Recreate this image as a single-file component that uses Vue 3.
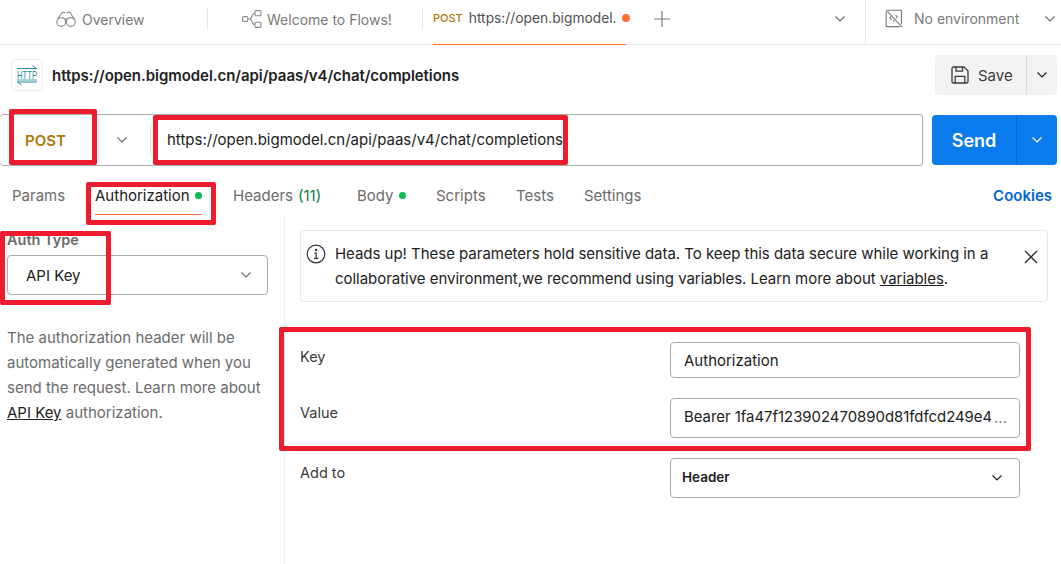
<script setup>
const requestUrl = 'https://open.bigmodel.cn/api/paas/v4/chat/completions'

const requestTabs = [
  { name: 'Params', width: 83 },
  { name: 'Authorization', width: 138, dot: true, active: true },
  { name: 'Headers', width: 124, count: '(11)' },
  { name: 'Body', width: 79, dot: true },
  { name: 'Scripts', width: 80 },
  { name: 'Tests', width: 68 },
  { name: 'Settings', width: 100 },
]
</script>

<template>
  <div class="page">
    <header class="topbar">
      <div class="tab tab-overview">
        <svg width="20" height="18" viewBox="0 0 20 18" fill="none" stroke="#8a8a8a" stroke-width="1.1">
          <circle cx="5.2" cy="12" r="4.4" />
          <circle cx="14.8" cy="12" r="4.4" />
          <path d="M1.5 9.5 5.5 3.2C6.5 1.6 8.6 1.8 9.3 3.4M18.5 9.5 14.5 3.2C13.5 1.6 11.4 1.8 10.7 3.4M8.3 9.6C9.2 8.8 10.8 8.8 11.7 9.6" />
        </svg>
        <span>Overview</span>
      </div>
      <div class="tab tab-flows">
        <svg width="20" height="18" viewBox="0 0 20 18" fill="none" stroke="#8a8a8a" stroke-width="1.1">
          <rect x="0.6" y="6.6" width="5.2" height="4.8" rx="1" />
          <rect x="13" y="0.6" width="6" height="5.2" rx="1" />
          <rect x="13" y="12.2" width="6" height="5.2" rx="1" />
          <path d="M5.8 9H8M8 9C10 9 9.5 3.2 13 3.2M8 9C10 9 9.5 14.8 13 14.8" />
        </svg>
        <span>Welcome to Flows!</span>
      </div>
      <div class="tab tab-request">
        <span class="tab-method">POST</span>
        <span class="tab-url">https://open.bigmodel.</span>
        <span class="tab-dot"></span>
      </div>
      <svg class="plus" width="16" height="16" viewBox="0 0 16 16" stroke="#7f7f7f" stroke-width="1.2">
        <path d="M8 0V16M0 8H16" />
      </svg>
      <svg class="tabs-chevron chev" width="10" height="6" viewBox="0 0 10 6"><path d="M.5.5 5 5 9.5.5" /></svg>
      <div class="env">
        <svg width="18" height="19" viewBox="0 0 18 19" fill="none" stroke="#777" stroke-width="1.1">
          <path d="M3 1.2H16.4V15M14.8 17.6H1.2V2.8" />
          <path d="M1 .8 17.4 18.4" />
          <path d="M6 7.4 4.8 8.8 6.6 11M10.4 6.4 12 7.2 11.4 9.4M7.8 11.6 9.8 12.4" />
        </svg>
        <span class="env-label">No environment</span>
        <svg class="chev" width="10" height="6" viewBox="0 0 10 6"><path d="M.5.5 5 5 9.5.5" /></svg>
      </div>
    </header>

    <div class="title-row">
      <div class="http-icon">
        <svg width="22" height="22" viewBox="0 0 22 22" fill="none" stroke="#1d8a9e" stroke-width="1">
          <path d="M1 4.5H21M16.5 1.6 20.5 4.5" />
          <text x="11" y="15" text-anchor="middle" textLength="20" lengthAdjust="spacingAndGlyphs" class="http-text">HTTP</text>
          <path d="M1 16H21" stroke-width=".8" />
          <path d="M1 18H21M1.5 18 5.5 20.8" />
        </svg>
      </div>
      <div class="title">{{ requestUrl }}</div>
      <div class="save-btn">
        <div class="save-main">
          <svg width="18" height="18" viewBox="0 0 18 18" fill="none" stroke="#3a3a3a" stroke-width="1.3">
            <path d="M1 2.4C1 1.6 1.6 1 2.4 1H13L17 5V15.6C17 16.4 16.4 17 15.6 17H2.4C1.6 17 1 16.4 1 15.6Z" />
            <path d="M5 1V5.2H11.5V1M4.2 17V10.4H13.8V17" />
          </svg>
          <span>Save</span>
        </div>
        <div class="save-more">
          <svg class="chev dark" width="10" height="6" viewBox="0 0 10 6"><path d="M.5.5 5 5 9.5.5" /></svg>
        </div>
      </div>
    </div>

    <div class="url-row">
      <div class="url-box">
        <div class="method">
          <span>POST</span>
          <svg class="chev" width="10" height="6" viewBox="0 0 10 6"><path d="M.5.5 5 5 9.5.5" /></svg>
        </div>
        <div class="url-text">{{ requestUrl }}</div>
      </div>
      <div class="send">
        <div class="send-main">Send</div>
        <div class="send-more">
          <svg class="chev white" width="10" height="6" viewBox="0 0 10 6"><path d="M.5.5 5 5 9.5.5" /></svg>
        </div>
      </div>
    </div>

    <nav class="req-tabs">
      <div
        v-for="t in requestTabs"
        :key="t.name"
        class="req-tab"
        :class="{ active: t.active }"
        :style="{ width: t.width + 'px' }"
      >
        <span class="req-tab-label">
          {{ t.name }}
          <span v-if="t.count" class="count">{{ t.count }}</span>
          <span v-if="t.dot" class="green-dot"></span>
        </span>
      </div>
      <div class="cookies">Cookies</div>
    </nav>

    <main class="body">
      <aside class="left">
        <div class="auth-label">Auth Type</div>
        <div class="auth-select">
          <span>API Key</span>
          <svg class="chev" width="10" height="6" viewBox="0 0 10 6"><path d="M.5.5 5 5 9.5.5" /></svg>
        </div>
        <p class="auth-desc">
          The authorization header will be automatically generated when you send the request. Learn more about
          <a class="link">API Key</a> authorization.
        </p>
      </aside>
      <section class="right">
        <div class="alert">
          <svg class="alert-icon" width="20" height="20" viewBox="0 0 20 20" fill="none" stroke="#333" stroke-width="1.2">
            <circle cx="10" cy="10" r="8.8" />
            <path d="M8.2 9.2H10.2V14.4M8 14.4H12.4" />
            <circle cx="10" cy="6" r=".6" fill="#333" />
          </svg>
          <div class="alert-text">
            Heads up! These parameters hold sensitive data. To keep this data secure while working in a collaborative environment,we recommend using variables. Learn more about <a class="link">variables</a>.
          </div>
          <svg class="alert-close" width="14" height="14" viewBox="0 0 14 14" stroke="#2b2b2b" stroke-width="1.4">
            <path d="M1 1 13 13M13 1 1 13" />
          </svg>
        </div>
        <div class="form">
          <div class="form-label">Key</div>
          <div class="field field-key">Authorization</div>
          <div class="form-label">Value</div>
          <div class="field field-value">
            <span class="value-text">Bearer 1fa47f123902470890d81fdfcd249e4</span><span class="ellipsis">...</span>
          </div>
          <div class="form-label">Add to</div>
          <div class="field field-select">
            <span>Header</span>
            <svg class="chev dark" width="10" height="6" viewBox="0 0 10 6"><path d="M.5.5 5 5 9.5.5" /></svg>
          </div>
        </div>
      </section>
    </main>

    <div class="mark mark-post"></div>
    <div class="mark mark-url"></div>
    <div class="mark mark-auth"></div>
    <div class="mark mark-type"></div>
    <div class="mark mark-form"></div>
  </div>
</template>

<style>
html, body { margin: 0; background: #fff; overflow: hidden; }
</style>

<style scoped>
.page {
  position: relative;
  width: 1061px;
  height: 564px;
  overflow: hidden;
  background: #fff;
  font-family: Inter, "Liberation Sans", sans-serif;
  font-size: 15px;
  color: #212121;
}
.chev { fill: none; stroke: #6b6b6b; stroke-width: 1.2; flex-shrink: 0; }
.chev.dark { stroke: #212121; }
.chev.white { stroke: #fff; }

.topbar {
  display: flex;
  align-items: flex-start;
  height: 45px;
  box-sizing: border-box;
  border-bottom: 1px solid #e8e8e8;
  font-size: 14px;
  color: #7a7a7a;
}
.tab { display: flex; align-items: center; gap: 6px; box-sizing: border-box; }
.tab-overview { width: 208px; height: 22px; margin-top: 8px; padding-left: 56px; border-right: 1px solid #e8e8e8; }
.tab-flows { width: 215px; height: 22px; margin-top: 8px; padding-left: 34px; gap: 5px; border-right: 1px solid #e8e8e8; }
.tab-request {
  width: 193px;
  height: 45px;
  margin-left: 10px;
  padding-bottom: 8px;
  border-bottom: 1px solid #ff6c37;
  color: #505050;
}
.tab-method { font-size: 11px; font-weight: 500; color: #ad7a03; }
.tab-url { font-size: 13.8px; white-space: nowrap; }
.tab-dot { flex-shrink: 0; width: 8px; height: 8px; border-radius: 50%; background: #ff6c37; margin-left: -1px; }
.plus { margin: 11px 0 0 28px; }
.tabs-chevron { margin: 16px 0 0 165px; }
.env {
  display: flex;
  align-items: center;
  width: 196px;
  height: 44px;
  margin-left: 20px;
  padding: 0 0 7px 19px;
  border-left: 1px solid #e8e8e8;
  box-sizing: border-box;
}
.env-label { margin-left: 11px; width: 131px; white-space: nowrap; }

.title-row {
  display: flex;
  align-items: center;
  height: 60px;
  margin-bottom: 9px;
  padding: 0 4px 0 11px;
  box-sizing: border-box;
}
.http-icon {
  display: flex;
  align-items: center;
  justify-content: center;
  width: 32px;
  height: 32px;
  box-sizing: border-box;
  border: 1px solid #ededed;
  border-radius: 5px;
}
.http-text { font-size: 11px; fill: #1d8a9e; stroke: none; font-family: "Liberation Sans", sans-serif; }
.title { margin-left: 9px; font-size: 15px; font-weight: 600; letter-spacing: -0.05px; color: #212121; flex: 1; }
.save-btn { display: flex; height: 40px; width: 122px; background: #f2f2f2; border-radius: 4px; }
.save-main {
  display: flex;
  align-items: center;
  gap: 9px;
  width: 92px;
  padding-left: 16px;
  box-sizing: border-box;
  border-right: 1px solid #dcdcdc;
  color: #3a3a3a;
}
.save-more { flex: 1; display: flex; align-items: center; justify-content: center; }

.url-row { display: flex; height: 52px; padding: 0 4px 0 0; box-sizing: border-box; }
.url-box {
  display: flex;
  align-items: stretch;
  width: 923px;
  height: 52px;
  box-sizing: border-box;
  border: 1px solid #ababab;
  border-left: none;
  border-radius: 4px;
}
.method {
  display: flex;
  align-items: center;
  width: 151px;
  margin: 10px 0;
  padding-left: 25px;
  box-sizing: border-box;
  border-right: 1px solid #e2e2e2;
  font-weight: 600;
  color: #ad7a03;
}
.method .chev { margin-left: 51px; }
.url-text { display: flex; align-items: center; padding: 0 0 2px 16px; }
.send {
  display: flex;
  width: 125px;
  height: 50px;
  margin: 1px 0 0 9px;
  background: #097bed;
  border-radius: 4px;
  color: #fff;
}
.send-main {
  display: flex;
  align-items: center;
  justify-content: center;
  width: 84px;
  border-right: 1px solid #0265d2;
  font-size: 18px;
  font-weight: 600;
}
.send-more { flex: 1; display: flex; align-items: center; justify-content: center; }

.req-tabs { display: flex; align-items: flex-end; height: 49px; padding-left: 12px; color: #6b6b6b; }
.req-tab { display: flex; white-space: nowrap; }
.req-tab-label {
  display: flex;
  align-items: center;
  gap: 5px;
  height: 40px;
  box-sizing: border-box;
}
.req-tab.active { color: #212121; }
.req-tab.active .req-tab-label {
  padding-top: 1px;
  border-bottom: 1px solid #ff6c37;
}
.count { color: #0c7a43; }
.green-dot { width: 7px; height: 7px; border-radius: 50%; background: #0cbb52; }
.cookies { margin-left: auto; padding-right: 9px; height: 40px; line-height: 41px; font-weight: 600; color: #0265d2; }

.body { display: flex; height: 349px; }
.left {
  width: 285px;
  box-sizing: border-box;
  padding: 16px 16px 0 7px;
  border-right: 1px solid #ededed;
}
.auth-label { font-size: 14.5px; font-weight: 600; line-height: 17px; color: #6b6b6b; }
.auth-select {
  display: flex;
  align-items: center;
  justify-content: space-between;
  width: 261px;
  height: 40px;
  margin-top: 7px;
  padding: 0 16px 0 18px;
  box-sizing: border-box;
  border: 1px solid #ababab;
  border-radius: 4px;
}
.auth-desc { margin: 30px 0 0; width: 262px; line-height: 25px; color: #6b6b6b; }
.link { color: #212121; text-decoration: underline; }

.right { flex: 1; padding: 15px 14px 0 15px; }
.alert {
  display: flex;
  align-items: flex-start;
  height: 72px;
  box-sizing: border-box;
  padding: 10px 9px 0 5px;
  border: 1px solid #e8e8e8;
  border-radius: 4px;
}
.alert-icon { margin: 3px 0 0 0; flex-shrink: 0; }
.alert-text { width: 675px; margin-left: 9px; line-height: 25px; letter-spacing: -0.03px; color: #212121; }
.alert-close { margin: 9px 0 0 14px; flex-shrink: 0; }
.form {
  display: grid;
  grid-template-columns: 370px 350px;
  grid-template-rows: 36px 40px 40px;
  row-gap: 20px;
  margin-top: 40px;
}
.form-label { padding-top: 5px; line-height: 20px; font-size: 14.5px; color: #3a3a3a; }
.field {
  display: flex;
  align-items: center;
  padding: 0 13px;
  box-sizing: border-box;
  border: 1px solid #ababab;
  border-radius: 4px;
  white-space: nowrap;
  overflow: hidden;
}
.field-value { padding-bottom: 2px; }
.value-text { width: 307px; overflow: hidden; flex-shrink: 0; font-size: 14.9px; }
.ellipsis { margin-left: 3px; color: #8a8a8a; }
.field-select {
  justify-content: space-between;
  padding: 0 17px 2px 11px;
  font-weight: 600;
  font-size: 13.5px;
}
.field-select .chev { margin-top: 2px; }

.mark { position: absolute; box-sizing: border-box; border: 5px solid #ee1c2e; border-radius: 2px; }
.mark-post { left: 9px; top: 109px; width: 88px; height: 56px; }
.mark-url { left: 153px; top: 115px; width: 415px; height: 50px; }
.mark-auth { left: 86px; top: 182px; width: 130px; height: 43px; }
.mark-type { left: 0; top: 231px; width: 111px; height: 74px; }
.mark-form { left: 279px; top: 327px; width: 752px; height: 124px; }
</style>
